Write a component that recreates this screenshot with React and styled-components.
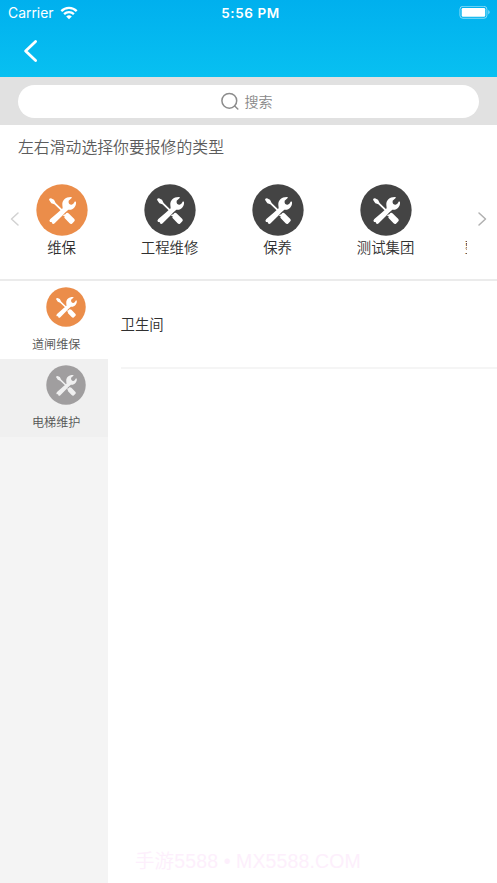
import React from "react";
import styled, { createGlobalStyle } from "styled-components";

const GlobalStyle = createGlobalStyle`
  * {
    box-sizing: border-box;
  }
  body {
    margin: 0;
    background: #ffffff;
    font-family: "Noto Sans CJK SC", sans-serif;
    font-weight: 350;
  }
`;

const Page = styled.div`
  position: relative;
  display: flex;
  flex-direction: column;
  width: 497px;
  height: 883px;
  overflow: hidden;
`;

const Header = styled.header`
  height: 77px;
  flex: none;
  background: linear-gradient(#00b0ee, #08c0f1);
  color: #ffffff;
`;

const StatusBar = styled.div`
  display: grid;
  grid-template-columns: 1fr auto 1fr;
  align-items: center;
  height: 26px;
  padding: 0 6px 0 8px;
  font-family: Inter, sans-serif;
  font-size: 14px;
`;

const Carrier = styled.div`
  display: flex;
  align-items: center;
  gap: 6px;
  height: 24px;
  padding-bottom: 1px;
  font-weight: 400;
  font-size: 13.9px;
`;

const Time = styled.div`
  padding-left: 2px;
  font-size: 13.5px;
  font-weight: 600;
  letter-spacing: 0.6px;
`;

const Battery = styled.div`
  display: flex;
  justify-content: flex-end;
`;

const NavBar = styled.div`
  padding: 12px 23px;
`;

const SearchBar = styled.div`
  height: 48px;
  flex: none;
  padding: 8px 18px 7px;
  background: #e1e1e1;
`;

const SearchInput = styled.div`
  display: flex;
  align-items: center;
  justify-content: center;
  gap: 6px;
  height: 33px;
  border-radius: 17px;
  padding: 0 4px 2px 0;
  background: #ffffff;
  color: #888888;
  font-size: 14px;
`;

const TypeSection = styled.section`
  height: 156px;
  flex: none;
  border-bottom: 2px solid #ebebeb;
`;

const Title = styled.div`
  height: 59px;
  padding: 10px 18px 0;
  color: #5c5c5c;
  font-size: 15.85px;
  line-height: 24px;
`;

const Slider = styled.div`
  display: flex;
`;

const Arrow = styled.div`
  flex: none;
  width: ${(props) => (props.$right ? "30px" : "20px")};
  padding-top: 27px;
  padding-left: 10px;
  color: ${(props) => props.$color};
`;

const TypeList = styled.div`
  display: flex;
  width: 447px;
  overflow: hidden;
`;

const TypeItem = styled.div`
  display: flex;
  flex: none;
  flex-direction: column;
  align-items: center;
  width: 108px;
  color: #303030;
  font-size: 14.4px;
  line-height: 22px;

  &:first-child {
    margin-left: -12.4px;
  }
`;

const Content = styled.div`
  display: flex;
  flex: 1;
`;

const Sidebar = styled.aside`
  width: 108px;
  background: #f4f4f4;
`;

const SideItem = styled.div`
  height: 78px;
  padding: 6px 0 0 32px;
  background: ${(props) => (props.$active ? "#ffffff" : "#f0f0f0")};
  color: #555555;
  font-size: 12.1px;
  line-height: 18px;
`;

const SideIcon = styled.div`
  height: 48px;
  padding-left: 13.6px;
`;

const Places = styled.div`
  flex: 1;
  padding-left: 12.5px;
`;

const Place = styled.div`
  height: 88px;
  border-bottom: 2px solid #f5f5f5;
  color: #303030;
  font-size: 14.4px;
  line-height: 86px;
`;

const Watermark = styled.div`
  position: absolute;
  left: 135px;
  top: 846px;
  color: #fdeffc;
  font-family: "Liberation Sans", "Noto Sans CJK SC", sans-serif;
  font-size: 19.5px;
  letter-spacing: 0.12px;
  line-height: 30px;
  white-space: nowrap;
`;

const types = [
  { name: "维保", color: "#eb8d4a" },
  { name: "工程维修", color: "#444444" },
  { name: "保养", color: "#444444" },
  { name: "测试集团", color: "#444444" },
  { name: "整体维修", color: "#444444" },
];

const sideItems = [
  { name: "道闸维保", color: "#eb8d4a", active: true },
  { name: "电梯维护", color: "#a09e9f", tint: "#f0f0f0" },
];

function ToolIcon({ size, color, tint = "#ffffff" }) {
  return (
    <svg
      width={size}
      height={size}
      viewBox="0 0 156 156"
      style={{ display: "block" }}
    >
      <circle cx="78" cy="78" r="77" fill={color} />
      <g fill={tint}>
        <path d="M39 47Q40 43 45 43L54 47L59 57L80 77L76 81L55 61L46 58Z" />
        <path d="M80 73L79 63C78 48 89 38 107 39L107 42L98 50Q96 62 107 62L112 59L117 52L120 54C122 68 109 80 97 77L87 86L78 96L56 118Q52 122 48 118L47 114L42 114Q38 110 43 105L65 86Z" />
        <path d="M81 95L83 92L88 91L91 87Q95 85 99 89L115 105Q118 109 115 112L108 119Q104 121 100 117L85 101L86 97Z" />
      </g>
    </svg>
  );
}

function Chevron({ width, height, stroke, d }) {
  return (
    <svg width={width} height={height} style={{ display: "block" }}>
      <path
        d={d}
        fill="none"
        stroke="currentColor"
        strokeWidth={stroke}
        strokeLinecap="round"
        strokeLinejoin="round"
      />
    </svg>
  );
}

function WifiIcon() {
  return (
    <svg width="18" height="14" viewBox="0 0 18 14">
      <g fill="none" stroke="#ffffff" strokeWidth="2.3">
        <path d="M1.3 5.1C5.6.8 12.4.8 16.7 5.1" />
        <path d="M4.1 8.2C6.9 5.5 11.1 5.5 13.9 8.2" />
      </g>
      <path d="M6.2 10.4Q9 8.1 11.8 10.4L9 13.2Z" fill="#ffffff" />
    </svg>
  );
}

function BatteryIcon() {
  return (
    <svg width="32" height="14" viewBox="0 0 32 14">
      <rect
        x="0.9"
        y="0.3"
        width="27"
        height="12"
        rx="3"
        fill="none"
        stroke="#ffffff"
        strokeOpacity="0.5"
      />
      <rect x="2.7" y="2" width="23.5" height="8.7" rx="1.3" fill="#ffffff" />
      <path d="M29.3 4.1Q32 6.3 29.3 8.5Z" fill="#ffffff" fillOpacity="0.6" />
    </svg>
  );
}

function SearchIcon() {
  return (
    <svg width="18" height="18" viewBox="0 0 18 18">
      <g fill="none" stroke="#8c8c8c" strokeWidth="1.5" strokeLinecap="round">
        <circle cx="8.3" cy="8.8" r="7.4" />
        <path d="M13.7 14L16.8 17" />
      </g>
    </svg>
  );
}

export default function App() {
  return (
    <Page>
      <GlobalStyle />
      <Header>
        <StatusBar>
          <Carrier>
            Carrier
            <WifiIcon />
          </Carrier>
          <Time>5:56 PM</Time>
          <Battery>
            <BatteryIcon />
          </Battery>
        </StatusBar>
        <NavBar>
          <Chevron width="16" height="25" stroke="2.8" d="M12.6 3.4L2.6 13L12.6 22.6" />
        </NavBar>
      </Header>
      <SearchBar>
        <SearchInput>
          <SearchIcon />
          搜索
        </SearchInput>
      </SearchBar>
      <TypeSection>
        <Title>左右滑动选择你要报修的类型</Title>
        <Slider>
          <Arrow $color="#d2d2d2">
            <Chevron width="10" height="16" stroke="1.5" d="M8 2L1.5 8L8 14" />
          </Arrow>
          <TypeList>
            {types.map((type) => (
              <TypeItem key={type.name}>
                <ToolIcon size={52} color={type.color} />
                {type.name}
              </TypeItem>
            ))}
          </TypeList>
          <Arrow $right $color="#b0b0b0">
            <Chevron width="10" height="16" stroke="1.5" d="M2 2L8.5 8L2 14" />
          </Arrow>
        </Slider>
      </TypeSection>
      <Content>
        <Sidebar>
          {sideItems.map((item) => (
            <SideItem key={item.name} $active={item.active}>
              <SideIcon>
                <ToolIcon size={40} color={item.color} tint={item.tint} />
              </SideIcon>
              {item.name}
            </SideItem>
          ))}
        </Sidebar>
        <Places>
          <Place>卫生间</Place>
        </Places>
      </Content>
      <Watermark>手游5588 • MX5588.COM</Watermark>
    </Page>
  );
}
